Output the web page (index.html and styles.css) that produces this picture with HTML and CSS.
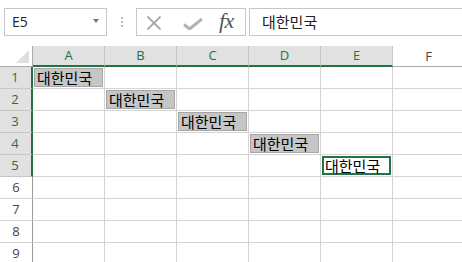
FILE: index.html
```html
<!DOCTYPE html>
<html>
<head>
<meta charset="utf-8">
<link rel="stylesheet" href="styles.css">
</head>
<body>
<div class="toolbar">
  <div class="namebox"><span class="ref">E5</span><span class="caret"></span></div>
  <div class="dots"><i></i><i></i><i></i></div>
  <div class="fbtns">
    <svg class="ic-x" width="16" height="14" viewBox="0 0 16 14"><path d="M1.5 0.5 L14.5 13.5 M14.5 0.5 L1.5 13.5" stroke="#a6a6a6" stroke-width="1.8" fill="none"/></svg>
    <svg class="ic-ok" width="20" height="12" viewBox="0 0 20 12"><path d="M1 6.5 L6.5 11 L19 1" stroke="#b3b3b3" stroke-width="3" fill="none"/></svg>
    <span class="fx">fx</span>
  </div>
  <div class="formula">대한민국</div>
</div>
<div class="sheet">
  <div class="corner"><span class="tri"></span></div>
  <div class="ch sel">A</div>
  <div class="ch sel">B</div>
  <div class="ch sel">C</div>
  <div class="ch sel">D</div>
  <div class="ch sel">E</div>
  <div class="ch">F</div>

  <div class="rh sel">1</div>
  <div class="c"><span class="fill">대한민국</span></div><div class="c"></div><div class="c"></div><div class="c"></div><div class="c"></div><div class="c"></div>
  <div class="rh sel">2</div>
  <div class="c"></div><div class="c"><span class="fill">대한민국</span></div><div class="c"></div><div class="c"></div><div class="c"></div><div class="c"></div>
  <div class="rh sel">3</div>
  <div class="c"></div><div class="c"></div><div class="c"><span class="fill">대한민국</span></div><div class="c"></div><div class="c"></div><div class="c"></div>
  <div class="rh sel">4</div>
  <div class="c"></div><div class="c"></div><div class="c"></div><div class="c"><span class="fill">대한민국</span></div><div class="c"></div><div class="c"></div>
  <div class="rh sel">5</div>
  <div class="c"></div><div class="c"></div><div class="c"></div><div class="c"></div><div class="c"><span class="active">대한민국</span></div><div class="c"></div>
  <div class="rh">6</div>
  <div class="c"></div><div class="c"></div><div class="c"></div><div class="c"></div><div class="c"></div><div class="c"></div>
  <div class="rh">7</div>
  <div class="c"></div><div class="c"></div><div class="c"></div><div class="c"></div><div class="c"></div><div class="c"></div>
  <div class="rh">8</div>
  <div class="c"></div><div class="c"></div><div class="c"></div><div class="c"></div><div class="c"></div><div class="c"></div>
  <div class="rh">9</div>
  <div class="c"></div><div class="c"></div><div class="c"></div><div class="c"></div><div class="c"></div><div class="c"></div>
</div>
</body>
</html>
```

FILE: styles.css
```css
* { box-sizing: border-box; }
html, body { margin: 0; padding: 0; background: #fff; overflow: hidden; }
body { width: 462px; height: 262px; font-family: "Open Sans", "Noto Sans", sans-serif; }

.toolbar {
  height: 46px;
  display: flex;
  align-items: flex-start;
  padding: 8px 0 0 4px;
}
.namebox {
  width: 103px;
  height: 28px;
  border: 1px solid #c6c6c6;
  display: flex;
  align-items: center;
  justify-content: space-between;
  padding: 0 7px 0 7px;
}
.ref { font-size: 14px; color: #222; line-height: 1; }
.caret {
  width: 0; height: 0;
  border-left: 3.5px solid transparent;
  border-right: 3.5px solid transparent;
  border-top: 4px solid #777;
  margin-top: -2px;
}
.dots {
  width: 29px;
  height: 28px;
  display: flex;
  flex-direction: column;
  align-items: center;
  justify-content: center;
  gap: 2px;
}
.dots i { display: block; width: 2px; height: 2px; background: #bdbdbd; }
.fbtns {
  width: 110px;
  height: 28px;
  border: 1px solid #c6c6c6;
  display: flex;
  align-items: center;
  padding: 0 0 0 9px;
}
.ic-x { margin-top: 1px; }
.ic-ok { margin-left: 21px; margin-top: 4px; }
.fx {
  margin-left: 16px;
  font-family: "Liberation Serif", serif;
  font-style: italic;
  font-size: 22px;
  color: #555;
  letter-spacing: -0.5px;
  line-height: 1;
  margin-top: -2px;
}
.formula {
  flex: 1;
  height: 28px;
  margin-left: 3px;
  border: 1px solid #c6c6c6;
  border-right: none;
  font-family: "Noto Sans CJK KR", sans-serif;
  font-size: 15px;
  color: #222;
  padding: 0 0 0 12px;
  line-height: 25px;
}

.sheet {
  display: grid;
  grid-template-columns: 33px repeat(6, 72px);
  grid-template-rows: 21px repeat(9, 22px);
}
.corner {
  position: relative;
  border-right: 1px solid #ababab;
  border-bottom: 1px solid #ababab;
  background: #fff;
}
.tri {
  position: absolute;
  right: 3px;
  bottom: 3px;
  width: 0; height: 0;
  border-left: 13px solid transparent;
  border-bottom: 13px solid #dfdfdf;
}
.ch {
  font-size: 13px;
  color: #444;
  text-align: center;
  line-height: 20px;
  border-right: 1px solid #d4d4d4;
  border-bottom: 1px solid #ababab;
  background: #fff;
}
.ch.sel {
  background: #e1e1e1;
  color: #217346;
  border-right-color: #c6c6c6;
  border-bottom: 2px solid #217346;
  line-height: 19px;
}
.rh {
  font-size: 13px;
  color: #444;
  text-align: center;
  line-height: 21px;
  border-right: 1px solid #9b9b9b;
  border-bottom: 1px solid #d4d4d4;
  background: #fff;
}
.rh.sel {
  background: #e1e1e1;
  color: #217346;
  border-right: 2px solid #217346;
  border-bottom-color: #c6c6c6;
  padding-right: 1px;
}
.c {
  border-right: 1px solid #d4d4d4;
  border-bottom: 1px solid #d4d4d4;
  padding: 1px 1px 1px 1px;
  display: flex;
}
.fill, .active {
  flex: 1;
  font-family: "Noto Sans CJK KR", sans-serif;
  font-size: 15px;
  color: #000;
  line-height: 17px;
  padding-left: 2px;
  white-space: nowrap;
}
.fill {
  background: #c6c6c6;
  border: 1px solid #a6a6a6;
}
.active {
  background: #fff;
  border: 2px solid #217346;
  line-height: 16px;
  padding-left: 1px;
}
```
